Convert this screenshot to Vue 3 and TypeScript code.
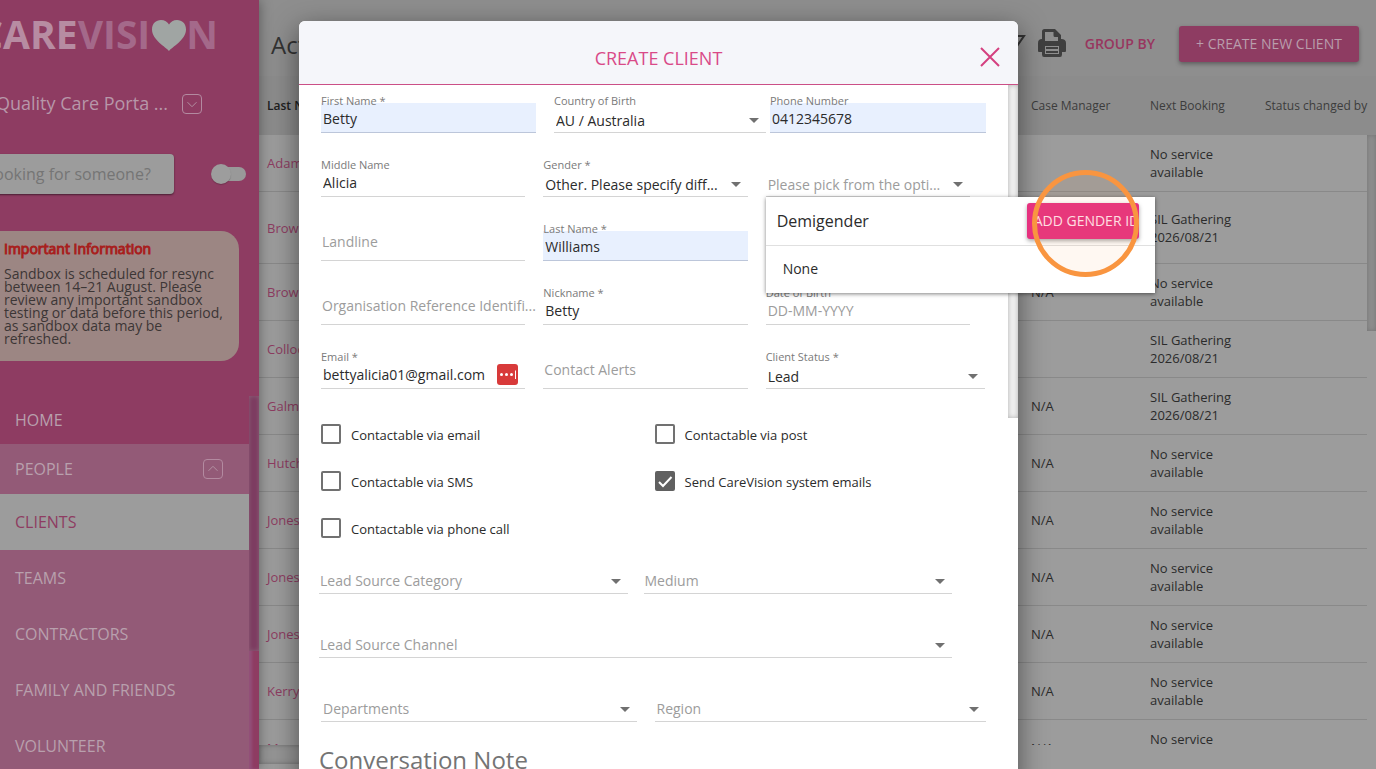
<script setup lang="ts">
import { ref } from 'vue'

type Kind = 'text' | 'select'
interface Field {
  id: string
  label: string
  kind: Kind
  value?: string
  placeholder?: string
  autofill?: boolean
  extra?: string
}

const personRows: { cls: string; fields: Field[] }[] = [
  {
    cls: 'lead-row',
    fields: [
      { id: 'first', label: 'First Name *', kind: 'text', value: 'Betty', autofill: true },
      { id: 'country', label: 'Country of Birth', kind: 'select', value: 'AU / Australia' },
      { id: 'phone', label: 'Phone Number', kind: 'text', value: '0412345678', autofill: true },
    ],
  },
  {
    cls: 'thirds',
    fields: [
      { id: 'middle', label: 'Middle Name', kind: 'text', value: 'Alicia' },
      { id: 'gender', label: 'Gender *', kind: 'select', value: 'Other. Please specify diff...' },
      { id: 'identity', label: '', kind: 'select', placeholder: 'Please pick from the opti...' },
    ],
  },
  {
    cls: 'thirds',
    fields: [
      { id: 'landline', label: 'Landline', kind: 'text' },
      { id: 'last', label: 'Last Name *', kind: 'text', value: 'Williams', autofill: true },
    ],
  },
  {
    cls: 'thirds',
    fields: [
      { id: 'org', label: 'Organisation Reference Identifi...', kind: 'text' },
      { id: 'nick', label: 'Nickname *', kind: 'text', value: 'Betty' },
      { id: 'dob', label: 'Date of Birth', kind: 'text', placeholder: 'DD-MM-YYYY' },
    ],
  },
  {
    cls: 'thirds',
    fields: [
      { id: 'email', label: 'Email *', kind: 'text', value: 'bettyalicia01@gmail.com', extra: 'secure' },
      { id: 'alerts', label: 'Contact Alerts', kind: 'text' },
      { id: 'status', label: 'Client Status *', kind: 'select', value: 'Lead', extra: 'wide' },
    ],
  },
]

const sourceRows: { cls: string; fields: { id: string; label: string }[] }[] = [
  { cls: 'source two', fields: [{ id: 'cat', label: 'Lead Source Category' }, { id: 'medium', label: 'Medium' }] },
  { cls: 'source', fields: [{ id: 'channel', label: 'Lead Source Channel' }] },
  { cls: 'halves', fields: [{ id: 'dept', label: 'Departments' }, { id: 'region', label: 'Region' }] },
]

const checks = ref([
  { id: 'c1', label: 'Contactable via email', on: false },
  { id: 'c2', label: 'Contactable via post', on: false },
  { id: 'c3', label: 'Contactable via SMS', on: false },
  { id: 'c4', label: 'Send CareVision system emails', on: true },
  { id: 'c5', label: 'Contactable via phone call', on: false },
])

const none = ['No service', 'available']
const sil = ['SIL Gathering', '2026/08/21']
const clients = [
  { name: 'Adam', manager: '', booking: none },
  { name: 'Brow', manager: '', booking: sil, tall: true },
  { name: 'Brow', manager: 'N/A', booking: none },
  { name: 'Colloc', manager: '', booking: sil },
  { name: 'Galm', manager: 'N/A', booking: sil },
  { name: 'Hutch', manager: 'N/A', booking: none },
  { name: 'Jones', manager: 'N/A', booking: none },
  { name: 'Jones', manager: 'N/A', booking: none },
  { name: 'Jones', manager: 'N/A', booking: none },
  { name: 'Kerry', manager: 'N/A', booking: none },
  { name: 'Ma', manager: 'N/A', booking: none },
]

const navItems = ['TEAMS', 'CONTRACTORS', 'FAMILY AND FRIENDS', 'VOLUNTEER']
const identity = ref('Demigender')
</script>

<template>
  <div class="page">
    <aside class="sidebar">
      <div class="logo">
        <span class="care">CARE</span><span class="vision">VISI</span>
        <svg class="heart" viewBox="0 0 34 31" aria-hidden="true">
          <path d="M17 31C14 27 0 20 0 9.500C0 3.500 4 0 9 0C12.500 0 15.500 1.800 17 4.500C18.500 1.800 21.500 0 25 0C30 0 34 3.500 34 9.500C34 20 20 27 17 31Z" />
        </svg>
        <span class="vision">N</span>
      </div>
      <div class="portal">
        <span>Quality Care Porta ...</span>
        <button class="chev" aria-label="Switch portal">
          <svg viewBox="0 0 20 20"><path d="M5 8l5 5 5-5" /></svg>
        </button>
      </div>
      <div class="search">
        <input type="text" aria-label="Search people" placeholder="Looking for someone?" />
        <button class="toggle" role="switch" aria-checked="false" aria-label="Search mode"><i></i></button>
      </div>
      <section class="notice">
        <h2>Important Information</h2>
        <p>Sandbox is scheduled for resync between 14–21 August. Please review any important sandbox testing or data before this period, as sandbox data may be refreshed.</p>
      </section>
      <div class="nav-wrap">
        <nav>
          <a href="#" class="home">HOME</a>
          <a href="#" class="people">
            <span>PEOPLE</span>
            <span class="chev"><svg viewBox="0 0 20 20"><path d="M5 12l5-5 5 5" /></svg></span>
          </a>
          <a href="#" class="active">CLIENTS</a>
          <a v-for="item in navItems" :key="item" href="#">{{ item }}</a>
        </nav>
        <div class="nav-scroll"><div></div></div>
      </div>
    </aside>

    <main class="main">
      <header class="topbar">
        <h1>Active</h1>
        <div class="tools">
          <svg class="funnel" viewBox="0 0 28 28" aria-hidden="true"><path d="M3 5H26L17 18V26L11 22V18Z" /></svg>
          <svg class="printer" viewBox="0 0 28 28" aria-hidden="true">
            <path class="body" d="M4 10V2.500Q4 0 6.500 0H17L23 6V10Q28 10 28 14V22Q28 23 27 23H24V25.500Q24 28 22 28H6Q4 28 4 25.500V23H1Q0 23 0 22V14Q0 10 4 10Z" />
            <path class="hole" d="M7 3H15.500V6.500Q15.500 8 17 8H20V12H7Z" />
            <rect class="hole" x="7" y="17" width="14" height="8" />
            <path class="lines" d="M8 19H20M8 23H20" />
          </svg>
          <button class="group">GROUP BY</button>
          <button class="create">+ CREATE NEW CLIENT</button>
        </div>
      </header>
      <div class="table-area">
        <table>
          <colgroup><col /><col class="c-manager" /><col class="c-next" /><col class="c-status" /></colgroup>
          <thead>
            <tr><th class="dark">Last Name</th><th>Case Manager</th><th>Next Booking</th><th>Status changed by</th></tr>
          </thead>
          <tbody>
            <tr v-for="(c, i) in clients" :key="i" :class="{ tall: c.tall }">
              <td><a href="#">{{ c.name }}</a></td>
              <td>{{ c.manager }}</td>
              <td>{{ c.booking[0] }}<br />{{ c.booking[1] }}</td>
              <td></td>
            </tr>
          </tbody>
        </table>
        <div class="table-scroll"></div>
      </div>
      <footer class="hscroll"><div></div></footer>
    </main>

    <div class="backdrop">
      <div class="dialog" role="dialog" aria-labelledby="dialog-title">
        <header class="dialog-head">
          <h2 id="dialog-title">CREATE CLIENT</h2>
          <button class="close" aria-label="Close">
            <svg viewBox="0 0 20 20"><path d="M1 1L19 19M19 1L1 19" /></svg>
          </button>
        </header>
        <div class="dialog-body">
          <form @submit.prevent>
            <div v-for="(row, r) in personRows" :key="r" class="row" :class="row.cls">
              <div
                v-for="f in row.fields"
                :key="f.id"
                class="field"
                :class="[f.extra, { rest: !f.value && !f.placeholder, auto: f.autofill }]"
              >
                <label :for="f.id">{{ f.label }}</label>
                <template v-if="f.kind === 'text'">
                  <input :id="f.id" type="text" :value="f.value" :placeholder="f.placeholder" />
                  <svg v-if="f.extra === 'secure'" class="vault" viewBox="0 0 21 21" aria-hidden="true">
                    <rect width="21" height="21" rx="3" />
                    <circle cx="4.500" cy="10.500" r="1.500" /><circle cx="9.500" cy="10.500" r="1.500" /><circle cx="14.500" cy="10.500" r="1.500" />
                    <path d="M18.500 6.500V15" />
                  </svg>
                </template>
                <template v-else>
                  <select :id="f.id" :class="{ hint: !f.value }" :aria-label="f.label || 'Gender identity'">
                    <option>{{ f.value ?? f.placeholder }}</option>
                  </select>
                  <svg class="arrow" viewBox="0 0 10 5" aria-hidden="true"><path d="M0 0H10L5 5Z" /></svg>
                </template>

                <div v-if="f.id === 'identity'" class="panel">
                  <div class="panel-head">
                    <input v-model="identity" type="text" aria-label="Gender identity search" />
                    <button class="add">ADD GENDER ID</button>
                  </div>
                  <button class="option">None</button>
                  <div class="ring"></div>
                </div>
              </div>
            </div>

            <div class="checks">
              <label v-for="c in checks" :key="c.id" :for="c.id">
                <input :id="c.id" v-model="c.on" type="checkbox" />
                <svg viewBox="0 0 20 20" aria-hidden="true"><path v-if="c.on" d="M4 11l4 4 8.500-9" /></svg>
                <span>{{ c.label }}</span>
              </label>
            </div>

            <div v-for="(row, r) in sourceRows" :key="'s' + r" class="row" :class="row.cls">
              <div v-for="f in row.fields" :key="f.id" class="field">
                <label :for="f.id"></label>
                <select :id="f.id" class="hint" :aria-label="f.label"><option>{{ f.label }}</option></select>
                <svg class="arrow" viewBox="0 0 10 5" aria-hidden="true"><path d="M0 0H10L5 5Z" /></svg>
              </div>
            </div>
            <h3>Conversation Note</h3>
          </form>
          <div class="body-scroll"></div>
        </div>
      </div>
    </div>
  </div>
</template>

<style>
body {
  margin: 0;
  overflow: hidden;
}
</style>

<style scoped>
.page,
.page * {
  box-sizing: border-box;
}
.page {
  position: relative;
  display: flex;
  height: 100vh;
  overflow: hidden;
  background: #9c9c9c;
  color: #2b2b2b;
  font-family: 'Open Sans', 'Noto Sans', sans-serif;
  font-size: 14px;
}
button,
input,
select {
  margin: 0;
  padding: 0;
  border: 0;
  background: none;
  color: inherit;
  font: inherit;
  outline: 0;
}
h1,
h2,
h3,
p {
  margin: 0;
  font-weight: 400;
}
a {
  color: inherit;
  text-decoration: none;
}

/* Sidebar */
.sidebar {
  z-index: 1;
  display: flex;
  flex: 0 0 259px;
  flex-direction: column;
  min-width: 0;
  background: #8e3c62;
  box-shadow: 0 0 12px rgba(0, 0, 0, 0.4);
}
.logo {
  display: flex;
  flex: none;
  align-items: center;
  justify-content: flex-end;
  height: 66px;
  padding-right: 41px;
  font-size: 39px;
  font-weight: 700;
}
.care {
  color: #b78ca2;
}
.vision {
  color: #a4698a;
}
.heart {
  flex: none;
  width: 34px;
  height: 31px;
  margin: 4px 0 0 2px;
  fill: #a0a5a3;
}
.portal {
  display: flex;
  align-items: center;
  justify-content: flex-end;
  gap: 14px;
  height: 76px;
  padding-right: 57px;
  color: #b797a9;
  font-size: 18px;
  white-space: nowrap;
}
.portal span {
  padding-bottom: 3px;
}
.chev {
  flex: none;
  width: 20px;
  height: 20px;
  border: 1px solid #b38aa0;
  border-radius: 4px;
}
.chev svg {
  display: block;
  fill: none;
  stroke: #b597a7;
}
.search {
  display: flex;
  align-items: center;
  justify-content: space-between;
  margin-top: 12px;
  padding-right: 13px;
}
.search input {
  width: 190px;
  height: 40px;
  margin-left: -16px;
  padding-left: 2px;
  border-radius: 4px;
  background: #9c9c9c;
  box-shadow: 0 1px 2px rgba(0, 0, 0, 0.5);
  font-size: 16px;
}
.search input::placeholder {
  color: #757575;
  opacity: 1;
}
.toggle {
  display: flex;
  align-items: center;
  width: 28px;
  height: 14px;
  border-radius: 7px;
  background: #999;
}
.toggle i {
  flex: none;
  width: 20px;
  height: 20px;
  margin-left: -7px;
  border-radius: 50%;
  background: #9d9d9d;
  box-shadow: 0 1px 1px rgba(0, 0, 0, 0.2);
}
.notice {
  height: 130px;
  margin: 37px 20px 35px 0;
  padding: 8px 10px 0 4px;
  border-radius: 0 18px 18px 0;
  background: #9c8683;
  color: #3c3636;
}
.notice h2 {
  margin-bottom: 8px;
  color: #a8201e;
  font-size: 14px;
  line-height: 20px;
  -webkit-text-stroke: 1px;
}
.notice p {
  line-height: 13px;
}
.nav-wrap {
  display: flex;
  flex: 1;
  min-height: 0;
  font-size: 16px;
  font-weight: 500;
}
nav {
  flex: 1;
}
nav a {
  display: flex;
  align-items: center;
  justify-content: space-between;
  height: 56px;
  padding: 0 26px 0 15px;
  background: #935a77;
  color: #b8a0ad;
}
nav .home {
  height: 48px;
  background: #8e3c62;
}
nav .people {
  height: 50px;
}
nav .active {
  background: #9c9c9c;
  color: #8e3c62;
}
.nav-scroll {
  width: 10px;
  background: #8e3c62;
  box-shadow: inset 3px 0 3px #93507a;
}
.nav-scroll div {
  height: 255px;
  background: #7c3b60;
  box-shadow: inset 0 0 5px #8c6078;
}

/* Client list */
.main {
  display: flex;
  flex: 1;
  flex-direction: column;
  min-width: 0;
}
.topbar {
  display: flex;
  flex: none;
  align-items: center;
  justify-content: space-between;
  height: 76px;
  padding: 12px 17px 0 12px;
  background: #8e8e8e;
}
h1 {
  color: #333;
  font-size: 24px;
}
.tools {
  display: flex;
  align-items: center;
}
.funnel {
  width: 28px;
  height: 28px;
  margin: 2px 12px 0 0;
  fill: none;
  stroke: #333;
  stroke-width: 2;
}
.printer {
  width: 28px;
  height: 28px;
  margin: 0 19px 2px 0;
}
.printer .body {
  fill: #3f3f3f;
}
.printer .hole {
  fill: #8e8e8e;
}
.printer .lines {
  fill: none;
  stroke: #3f3f3f;
  stroke-width: 2;
}
.group {
  margin-right: 24px;
  padding-bottom: 2px;
  color: #98365f;
  font-weight: 600;
}
.create {
  width: 180px;
  height: 36px;
  padding-bottom: 2px;
  border-radius: 3px;
  background: #8e3c62;
  box-shadow: 0 2px 4px rgba(0, 0, 0, 0.35);
  color: #b99eac;
  font-weight: 500;
}
.table-area {
  display: flex;
  flex: 1;
  align-items: flex-start;
  min-height: 0;
  overflow: hidden;
  background: linear-gradient(#8c8c8c 59px, #9c9c9c 59px);
}
table {
  flex: 1;
  width: 100%;
  border-collapse: separate;
  border-spacing: 0;
  table-layout: fixed;
  font-size: 13px;
  line-height: 18px;
}
.c-manager {
  width: 119px;
}
.c-next {
  width: 115px;
}
.c-status {
  width: 110px;
}
th {
  height: 59px;
  padding: 0 0 0 8px;
  color: #3c3c3c;
  font-size: 12px;
  font-weight: 500;
  text-align: left;
  white-space: nowrap;
}
th.dark {
  color: #202020;
  font-weight: 600;
}
td {
  height: 57px;
  padding: 0 0 0 8px;
  border-bottom: 1px solid #898989;
}
.tall td {
  height: 72px;
}
td a {
  color: #8e3c62;
}
.table-scroll {
  width: 9px;
  height: 196px;
  margin-top: 59px;
  background: #8e8e8e;
  box-shadow: inset 0 0 5px #747474;
}
.hscroll {
  flex: none;
  height: 24px;
}
.hscroll div {
  width: 50%;
  height: 19px;
  background: #959595;
  box-shadow: inset 0 0 5px #6e6e6e;
}

/* Dialog */
.backdrop {
  position: absolute;
  z-index: 2;
  inset: 0;
  display: flex;
  align-items: flex-start;
  justify-content: center;
  padding: 21px 59px 0 0;
}
.dialog {
  width: 719px;
  max-width: 90vw;
  min-height: 100vh;
  border-radius: 6px;
  background: #fff;
  box-shadow: 0 8px 28px rgba(0, 0, 0, 0.5);
}
.dialog-head {
  display: grid;
  grid-template-columns: 1fr auto 1fr;
  align-items: center;
  height: 64px;
  padding: 8px 18px 0;
  border-bottom: 1px solid #cb4f86;
  border-radius: 6px 6px 0 0;
  background: #f5f6fa;
}
.dialog-head h2 {
  grid-column: 2;
  padding-top: 2px;
  color: #d94a88;
  font-size: 18px;
}
.close {
  justify-self: end;
  width: 20px;
  height: 20px;
}
.close svg {
  display: block;
  fill: none;
  stroke: #d4407f;
  stroke-width: 2;
}
.dialog-body {
  display: flex;
  align-items: flex-start;
}
form {
  flex: 1;
  min-width: 0;
  padding: 0 20px 0 22px;
}
.body-scroll {
  width: 10px;
  height: 333px;
  background: #f0f0f0;
  box-shadow: inset 0 0 5px #b0b0b0;
}
.row {
  display: grid;
  margin-bottom: 16px;
}
.lead-row {
  grid-template-columns: 233fr 216fr 218fr;
}
.thirds {
  grid-template-columns: 1fr 1fr 1fr;
}
.lead-row .field:first-child,
.thirds .field,
.halves .field:first-child {
  margin-right: 18px;
}
.lead-row .field:nth-child(2) {
  margin-right: 4px;
}
.lead-row .field:last-child,
.halves .field:last-child {
  margin-right: 2px;
}
.thirds .wide {
  margin-right: 3px;
}
.source {
  gap: 16px;
  margin-right: 36px;
  margin-left: -2px;
}
.two {
  grid-template-columns: 1fr 1fr;
}
.halves {
  grid-template-columns: 1fr 1fr;
}
.field {
  position: relative;
  display: flex;
  flex-direction: column;
  min-width: 0;
  height: 48px;
}
.field > label {
  z-index: 1;
  flex: none;
  height: 18px;
  padding-top: 9px;
  color: #7a7a7a;
  font-size: 11px;
  line-height: 14px;
  pointer-events: none;
  white-space: nowrap;
}
.rest > label {
  padding: 20px 0 0 1px;
  color: #9c9c9c;
  font-size: 14px;
  line-height: 18px;
}
.field > input,
.field > select {
  width: 100%;
  height: 30px;
  padding: 1px 0 0 2px;
  border-bottom: 1px solid #d4d4d4;
}
.field > select {
  padding: 6px 20px 0 2px;
  appearance: none;
}
.source > .field > select,
.halves > .field > select {
  padding-top: 4px;
}
.source > .field > select {
  padding-left: 1px;
}
.auto > input {
  border-color: #bcc6da;
  background: #e8f0fe;
}
.field > .hint,
input::placeholder {
  color: #9c9c9c;
  opacity: 1;
}
.arrow {
  position: absolute;
  right: 7px;
  bottom: 10px;
  width: 10px;
  height: 5px;
  fill: #707070;
}
.vault {
  position: absolute;
  right: 7px;
  bottom: 4px;
  width: 21px;
  height: 21px;
  fill: #fff;
}
.vault rect {
  fill: #d83a3a;
}
.vault path {
  stroke: #fff;
}

/* Gender identity menu */
.panel {
  position: absolute;
  z-index: 5;
  top: 48px;
  left: 0;
  width: 389px;
  background: #fff;
  box-shadow: 0 1px 4px rgba(0, 0, 0, 0.5);
}
.panel-head {
  display: flex;
  align-items: center;
  justify-content: space-between;
  height: 49px;
  padding: 0 16px 0 11px;
  border-bottom: 1px solid #e0e0e0;
}
.panel-head input {
  min-width: 0;
  font-size: 16px;
}
.add {
  width: 112px;
  height: 36px;
  padding: 0 0 2px 7px;
  overflow: hidden;
  border-radius: 3px;
  background: #e6317f;
  box-shadow: 0 2px 4px rgba(0, 0, 0, 0.35);
  color: #ffe3ee;
  font-weight: 500;
  text-align: left;
  white-space: nowrap;
}
.option {
  display: block;
  width: 100%;
  height: 47px;
  padding: 0 0 2px 17px;
  text-align: left;
}
.ring {
  position: absolute;
  top: -27px;
  right: 16px;
  width: 107px;
  height: 107px;
  border: 5px solid #f99540;
  border-radius: 50%;
  background: rgba(249, 149, 64, 0.07);
  pointer-events: none;
}

/* Tick boxes */
.checks {
  display: grid;
  grid-template-columns: 1fr 1fr;
  gap: 27px 0;
  margin: 35px 0 8px;
  font-size: 13px;
}
.checks label {
  display: grid;
  grid-template-columns: 20px 1fr;
  gap: 0 10px;
  align-items: center;
  height: 20px;
}
.checks span {
  padding-top: 2px;
}
.checks input {
  grid-area: 1 / 1;
  width: 20px;
  height: 20px;
  border: 2px solid #717171;
  border-radius: 2px;
  appearance: none;
}
.checks input:checked {
  border-color: #606060;
  background: #606060;
}
.checks svg {
  grid-area: 1 / 1;
  width: 20px;
  height: 20px;
  fill: none;
  stroke: #fff;
  stroke-width: 2;
  pointer-events: none;
}
h3 {
  margin: 22px 0 0 -2px;
  color: #747474;
  font-size: 24px;
  line-height: 32px;
}
</style>
